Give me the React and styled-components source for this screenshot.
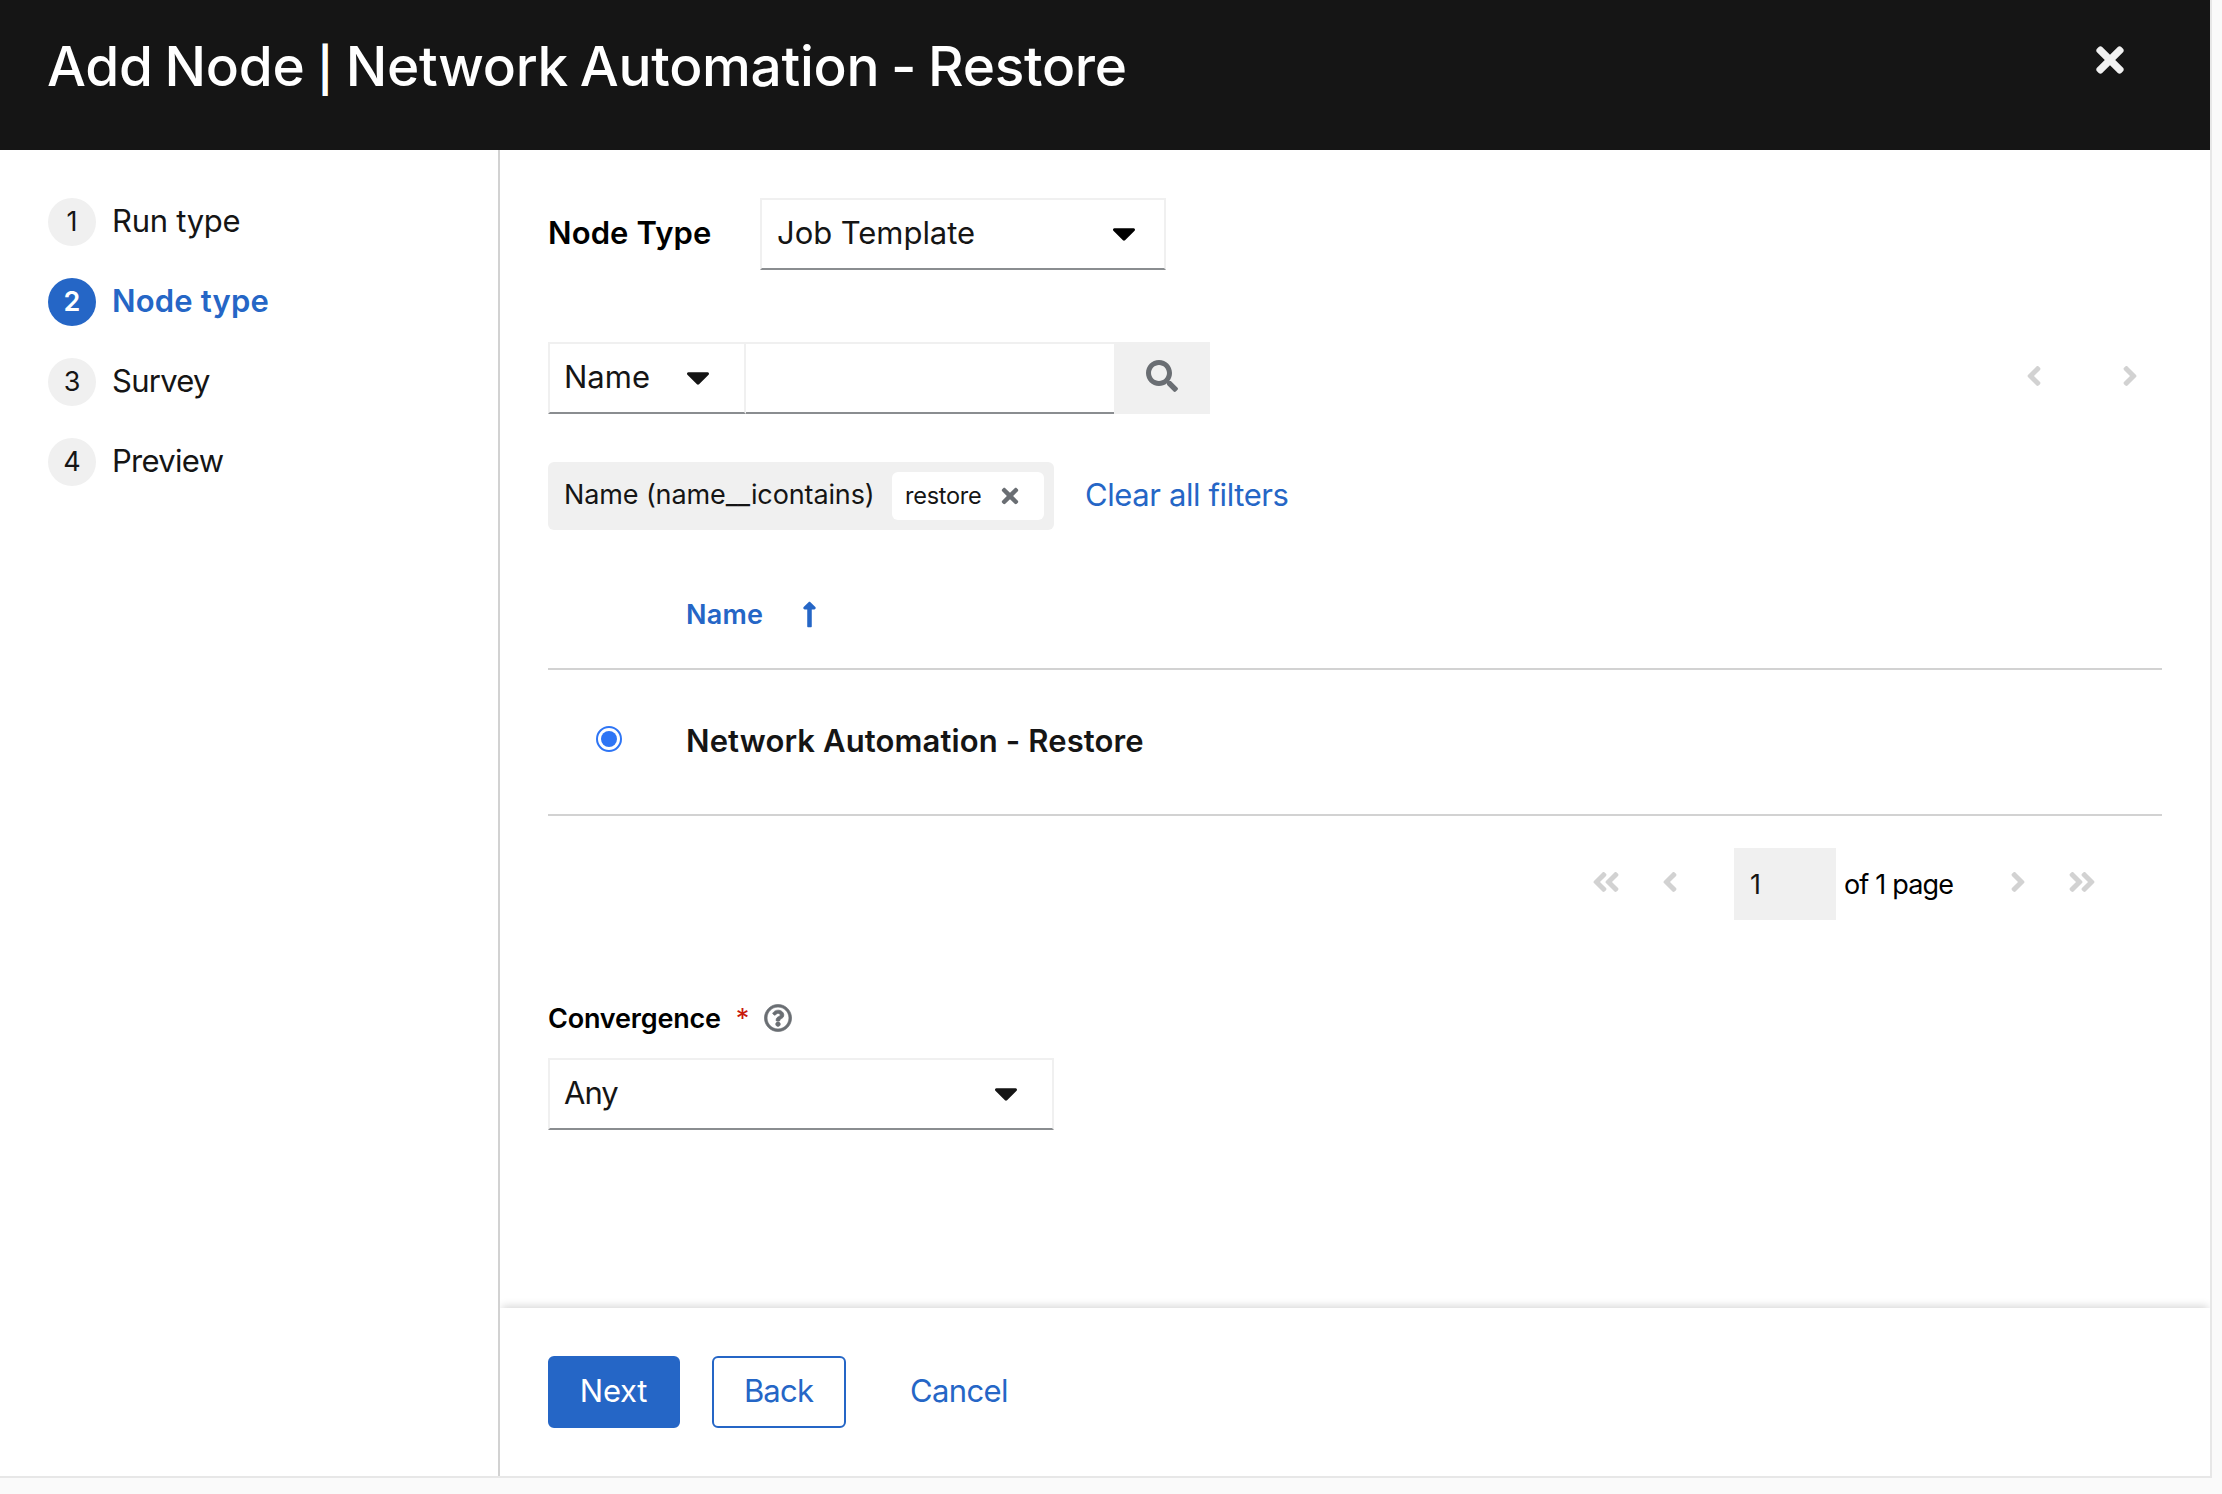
import React from 'react';
import styled, { createGlobalStyle, css } from 'styled-components';
import {
  FaAngleDoubleLeft,
  FaAngleDoubleRight,
  FaAngleLeft,
  FaAngleRight,
  FaCaretDown,
  FaLongArrowAltUp,
  FaRegQuestionCircle,
  FaSearch,
  FaTimes,
} from 'react-icons/fa';

const GlobalStyle = createGlobalStyle`
  *, *::before, *::after { box-sizing: border-box; }
  body {
    margin: 0;
    background: #fafafa;
    color: #151515;
    font-family: "Inter", "Liberation Sans", sans-serif;
    font-size: 31px;
    line-height: 48px;
    overflow: hidden;
  }
  svg { display: block; flex: none; }
`;

const Modal = styled.div`
  display: flex;
  flex-direction: column;
  width: 2212px;
  height: 1478px;
  background: #fff;
  border: solid #e7e7e7;
  border-width: 0 2px 2px 0;
`;

const Header = styled.header`
  display: flex;
  justify-content: space-between;
  align-items: flex-start;
  height: 150px;
  padding: 28px 80px 0 47px;
  background: #151515;
`;

const Title = styled.h1`
  margin: 0;
  color: #fff;
  font-size: 55px;
  font-weight: 500;
  line-height: 76px;
  letter-spacing: -0.3px;
  word-spacing: -2.5px;
  white-space: pre;
`;

const Divider = styled.span`
  padding: 0 1px;
  font-size: 44px;
  font-weight: 600;
  line-height: 1;
`;

const CloseButton = styled.button`
  display: grid;
  place-items: center;
  width: 40px;
  height: 64px;
  padding: 0;
  border: 0;
  background: none;
  color: #f0f0f0;
  font-size: 40px;
`;

const Body = styled.div`
  display: flex;
  flex: 1;
  min-height: 0;
`;

const Nav = styled.nav`
  width: 500px;
  border-right: 2px solid #d2d2d2;
`;

const StepList = styled.ol`
  display: flex;
  flex-direction: column;
  gap: 32px;
  margin: 0;
  padding: 48px;
  list-style: none;
`;

const Step = styled.li`
  display: flex;
  gap: 16px;
  height: 48px;
  font-weight: ${p => (p.$active ? 600 : 400)};
  color: ${p => (p.$active ? '#2566c6' : '#151515')};
`;

const StepNumber = styled.span`
  display: grid;
  place-items: center;
  width: 48px;
  height: 48px;
  border-radius: 50%;
  background: ${p => (p.$active ? '#2566c6' : '#f0f0f0')};
  color: ${p => (p.$active ? '#fff' : '#151515')};
  font-size: 27px;
`;

const StepLabel = styled.span`
  line-height: 45px;
  letter-spacing: ${p => p.$tracking}px;
`;

const Content = styled.div`
  display: flex;
  flex: 1;
  flex-direction: column;
`;

const Main = styled.main`
  flex: 1;
  padding: 48px 48px 0;
`;

const FieldRow = styled.div`
  display: flex;
  align-items: center;
  margin-bottom: 72px;
`;

const FieldLabel = styled.label`
  width: 212px;
  padding-bottom: 3px;
  color: #000;
  font-weight: 600;
  letter-spacing: 0.12px;
`;

const controlBorder = css`
  border: 2px solid #f0f0f0;
  border-bottom-color: #8a8d90;
`;

const Select = styled.div`
  display: flex;
  align-items: center;
  justify-content: space-between;
  width: ${p => p.$width}px;
  height: 72px;
  padding: 0 ${p => p.$padRight}px 0 ${p => p.$padLeft || 14}px;
  ${controlBorder}
  letter-spacing: ${p => p.$tracking || 0}px;

  svg { margin-bottom: 3px; font-size: 38px; }
`;

const SelectText = styled.span`
  padding-bottom: 3px;
`;

const Toolbar = styled.div`
  display: flex;
  align-items: center;
  justify-content: space-between;
  padding-right: 16px;
  margin-bottom: 48px;
`;

const SearchGroup = styled.div`
  display: flex;
`;

const SearchInput = styled.input`
  width: 368px;
  height: 72px;
  ${controlBorder}
  border-left: 0;
  border-right: 0;
  border-radius: 0;
  background: #fff;
`;

const SearchButton = styled.button`
  display: grid;
  place-items: center;
  width: 96px;
  height: 72px;
  padding: 0 0 4px;
  border: 0;
  background: #f0f0f0;
  color: #6a6e73;
  font-size: 32px;
`;

const TopPager = styled.div`
  display: flex;
  gap: 64px;
  color: #d2d2d2;
  font-size: 32px;
  padding-bottom: 4px;
`;

const Filters = styled.div`
  display: flex;
  align-items: center;
`;

const ChipGroup = styled.div`
  display: flex;
  align-items: center;
  justify-content: space-between;
  width: 506px;
  height: 68px;
  padding: 0 10px 0 16px;
  border-radius: 6px;
  background: #f0f0f0;
`;

const ChipGroupLabel = styled.span`
  padding-bottom: 3px;
  font-size: 27px;
  letter-spacing: -0.12px;
`;

const Chip = styled.span`
  display: flex;
  align-items: center;
  justify-content: space-between;
  width: 152px;
  height: 48px;
  padding: 0 22px 0 13px;
  border-radius: 6px;
  background: #fff;
  font-size: 23.5px;
  line-height: 46px;
  letter-spacing: -0.26px;

  svg { color: #6a6e73; font-size: 24px; }
`;

const LinkButton = styled.button`
  padding: 0 0 3px;
  margin-left: ${p => p.$offset}px;
  border: 0;
  background: none;
  color: #2566c6;
  font: inherit;
  letter-spacing: ${p => p.$tracking}px;
`;

const Table = styled.div`
  margin-top: 30px;
`;

const TableRow = styled.div`
  display: grid;
  grid-template-columns: 138px 1fr;
  align-items: center;
  height: ${p => p.$height}px;
  border-bottom: 2px solid #d2d2d2;
`;

const SortHeader = styled.span`
  display: flex;
  grid-column: 2;
  align-items: center;
  gap: 32px;
  padding-top: 1px;
  color: #2566c6;
  font-size: 27px;
  font-weight: 600;
  letter-spacing: 0.2px;

  svg { margin-bottom: 1px; font-size: 29px; }
`;

const Radio = styled.span`
  display: grid;
  place-items: center;
  width: 26px;
  height: 26px;
  margin: 0 0 6px 48px;
  border: 2px solid #2e75f5;
  border-radius: 50%;
  background: #fff;

  &::after {
    content: "";
    width: 16px;
    height: 16px;
    border-radius: 50%;
    background: #2e75f5;
  }
`;

const RowName = styled.span`
  padding-bottom: 3px;
  font-weight: 600;
  letter-spacing: 0.12px;
`;

const Pagination = styled.div`
  display: flex;
  align-items: center;
  justify-content: flex-end;
  height: 72px;
  margin-top: 32px;
  padding-right: 48px;
  color: #000;
  font-size: 27px;
`;

const PagerIcon = styled.span`
  display: grid;
  place-items: center;
  width: 64px;
  padding-bottom: 4px;
  color: #d2d2d2;
  font-size: 32px;
`;

const PageBox = styled.span`
  width: 102px;
  height: 72px;
  margin: 0 8px 0 32px;
  padding-left: 16px;
  background: #f0f0f0;
  color: #151515;
  line-height: 73px;
`;

const PageCount = styled.span`
  width: 142px;
  padding-top: 1px;
  letter-spacing: -0.82px;
`;

const ConvergenceLabel = styled.div`
  display: flex;
  align-items: center;
  height: 36px;
  margin: 80px 0 22px;
  padding-top: 1px;
  color: #000;
  font-size: 27px;
  font-weight: 600;
  letter-spacing: -0.19px;

  svg { margin: 0 0 1px 15px; color: #6a6e73; font-size: 28px; stroke: #6a6e73; stroke-width: 12px; }
`;

const Required = styled.span`
  margin-left: 15px;
  color: #c9190b;
  font-size: 27px;
  font-weight: 400;
`;

const Footer = styled.footer`
  display: flex;
  align-items: center;
  height: 168px;
  padding-left: 48px;
  background: #fff;
  box-shadow: 0 -4px 8px -2px rgba(3, 3, 3, 0.16);
  clip-path: inset(-20px 0 0 0);
`;

const Button = styled.button`
  width: ${p => p.$width}px;
  height: 72px;
  margin-right: 32px;
  padding: 0 1px 3px 0;
  border: 2px solid #2566c6;
  border-radius: 6px;
  background: ${p => (p.$primary ? '#2566c6' : '#fff')};
  color: ${p => (p.$primary ? '#fff' : '#2566c6')};
  font: inherit;
  letter-spacing: ${p => p.$tracking}px;
`;

const steps = [
  { label: 'Run type', tracking: -0.28 },
  { label: 'Node type', tracking: 0.18, active: true },
  { label: 'Survey', tracking: -0.73 },
  { label: 'Preview', tracking: -0.7 },
];

export default function App() {
  return (
    <>
      <GlobalStyle />
      <Modal>
        <Header>
          <Title>Add Node <Divider>|</Divider> Network Automation - Restore</Title>
          <CloseButton aria-label="Close"><FaTimes /></CloseButton>
        </Header>
        <Body>
          <Nav>
            <StepList>
              {steps.map((step, i) => (
                <Step key={step.label} $active={step.active}>
                  <StepNumber $active={step.active}>{i + 1}</StepNumber>
                  <StepLabel $tracking={step.tracking}>{step.label}</StepLabel>
                </Step>
              ))}
            </StepList>
          </Nav>
          <Content>
            <Main>
              <FieldRow>
                <FieldLabel>Node Type</FieldLabel>
                <Select $width={406} $padRight={21} $padLeft={15} $tracking={-0.05}>
                  <SelectText>Job Template</SelectText>
                  <FaCaretDown color="#000" />
                </Select>
              </FieldRow>
              <Toolbar>
                <SearchGroup>
                  <Select $width={198} $padRight={27}>
                    <SelectText>Name</SelectText>
                    <FaCaretDown />
                  </Select>
                  <SearchInput />
                  <SearchButton aria-label="Search"><FaSearch /></SearchButton>
                </SearchGroup>
                <TopPager><FaAngleLeft /><FaAngleRight /></TopPager>
              </Toolbar>
              <Filters>
                <ChipGroup>
                  <ChipGroupLabel>Name (name__icontains)</ChipGroupLabel>
                  <Chip>restore<FaTimes /></Chip>
                </ChipGroup>
                <LinkButton $offset={31} $tracking={-0.4}>Clear all filters</LinkButton>
              </Filters>
              <Table>
                <TableRow $height={110}>
                  <SortHeader>Name<FaLongArrowAltUp /></SortHeader>
                </TableRow>
                <TableRow $height={146}>
                  <Radio />
                  <RowName>Network Automation - Restore</RowName>
                </TableRow>
              </Table>
              <Pagination>
                <PagerIcon><FaAngleDoubleLeft /></PagerIcon>
                <PagerIcon><FaAngleLeft /></PagerIcon>
                <PageBox>1</PageBox>
                <PageCount>of 1 page</PageCount>
                <PagerIcon><FaAngleRight /></PagerIcon>
                <PagerIcon><FaAngleDoubleRight /></PagerIcon>
              </Pagination>
              <ConvergenceLabel>
                Convergence<Required>*</Required><FaRegQuestionCircle />
              </ConvergenceLabel>
              <Select $width={506} $padRight={27} $tracking={-1}>
                <SelectText>Any</SelectText>
                <FaCaretDown />
              </Select>
            </Main>
            <Footer>
              <Button $primary $width={132} $tracking={-0.25}>Next</Button>
              <Button $width={134} $tracking={-0.8}>Back</Button>
              <LinkButton $offset={32} $tracking={-0.63}>Cancel</LinkButton>
            </Footer>
          </Content>
        </Body>
      </Modal>
    </>
  );
}
